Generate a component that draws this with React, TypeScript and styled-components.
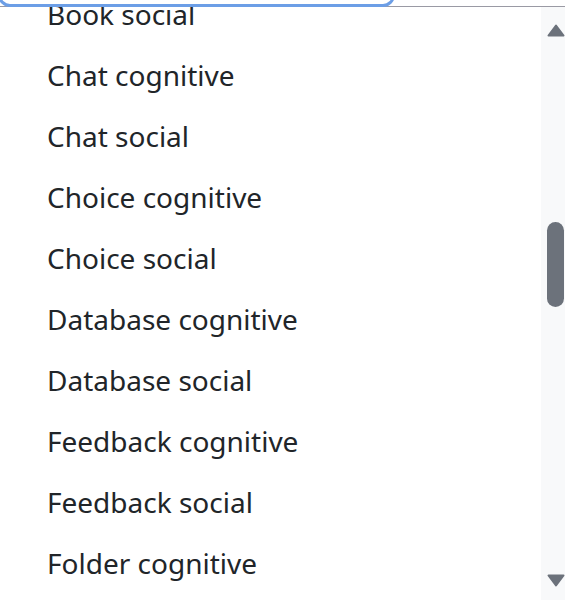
import styled, { createGlobalStyle } from 'styled-components';

const GlobalStyle = createGlobalStyle`
  html, body {
    margin: 0;
    padding: 0;
    background: #fff;
    overflow: hidden;
  }
  body {
    font-family: "Noto Sans", "Open Sans", sans-serif;
    color: #212529;
  }
`;

const Page = styled.div`
  width: 565px;
  height: 600px;
  display: flex;
  flex-direction: column;
  overflow: hidden;
`;

const Field = styled.div`
  position: relative;
  z-index: 1;
  box-sizing: border-box;
  width: 397px;
  height: 48px;
  margin: -41px 0 -1px -2px;
  border: 3px solid #6c9ee6;
  border-radius: 12px;
  background: #fff;
  flex: none;
`;

const Panel = styled.div`
  flex: 1;
  display: flex;
  min-height: 0;
  border-top: 1px solid #9a9aa4;
`;

const Viewport = styled.div`
  flex: 1;
  overflow: hidden;
`;

const OptionList = styled.ul<{ $offset: number }>`
  list-style: none;
  margin: ${(p) => -p.$offset}px 0 0;
  padding: 0;
`;

const Option = styled.li`
  height: 61px;
  line-height: 61px;
  padding-left: 47px;
  font-size: 28px;
  white-space: nowrap;
`;

const Scrollbar = styled.div`
  width: 24px;
  flex: none;
  box-sizing: border-box;
  background: #f8f9fa;
  display: flex;
  flex-direction: column;
  padding: 17px 0 13px 6px;
`;

const Thumb = styled.div`
  width: 17px;
  height: 85px;
  margin-top: 185px;
  border-radius: 9px;
  background: #6c727b;
`;

const Arrow = styled.svg<{ $down?: boolean }>`
  display: block;
  width: 18px;
  height: 13px;
  margin-top: ${(p) => (p.$down ? 'auto' : '0')};
  transform: ${(p) => (p.$down ? 'rotate(180deg)' : 'none')};
`;

function ArrowIcon({ down }: { down?: boolean }) {
  return (
    <Arrow $down={down} viewBox="0 0 18 13">
      <path
        d="M9 1.5 L16.5 11.5 L1.5 11.5 Z"
        fill="#6c727b"
        stroke="#6c727b"
        strokeWidth="2"
        strokeLinejoin="round"
      />
    </Arrow>
  );
}

const options = [
  'Book social',
  'Chat cognitive',
  'Chat social',
  'Choice cognitive',
  'Choice social',
  'Database cognitive',
  'Database social',
  'Feedback cognitive',
  'Feedback social',
  'Folder cognitive',
];

export default function App() {
  return (
    <>
      <GlobalStyle />
      <Page>
        <Field />
        <Panel>
          <Viewport>
            <OptionList $offset={23}>
              {options.map((o) => (
                <Option key={o}>{o}</Option>
              ))}
            </OptionList>
          </Viewport>
          <Scrollbar>
            <ArrowIcon />
            <Thumb />
            <ArrowIcon down />
          </Scrollbar>
        </Panel>
      </Page>
    </>
  );
}
